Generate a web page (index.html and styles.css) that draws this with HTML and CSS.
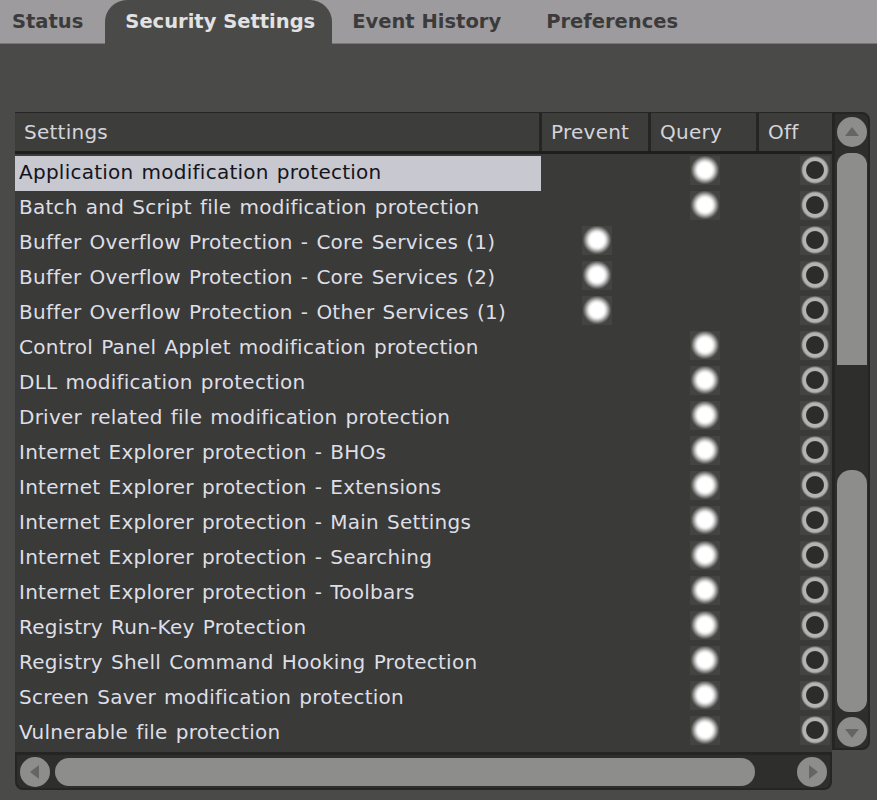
FILE: index.html
```html
<!DOCTYPE html>
<html lang="en">
<head>
    <meta charset="UTF-8">
    <title>Security Settings</title>
    <link rel="stylesheet" href="styles.css">
</head>
<body>
    <div class="tabs">
        <div class="tab first">Status</div>
        <div class="tab active">Security Settings</div>
        <div class="tab">Event History</div>
        <div class="tab">Preferences</div>
    </div>

    <div class="frame">
        <div class="list">
            <div class="row head">
                <div class="cell">Settings</div>
                <div class="cell">Prevent</div>
                <div class="cell">Query</div>
                <div class="cell">Off</div>
            </div>

            <div class="row selected">
                <div class="cell name">Application modification protection</div>
                <div class="cell"></div>
                <div class="cell"><span class="dot"></span></div>
                <div class="cell off"><span class="ring"></span></div>
            </div>
            <div class="row">
                <div class="cell name">Batch and Script file modification protection</div>
                <div class="cell"></div>
                <div class="cell"><span class="dot"></span></div>
                <div class="cell off"><span class="ring"></span></div>
            </div>
            <div class="row">
                <div class="cell name">Buffer Overflow Protection - Core Services (1)</div>
                <div class="cell"><span class="dot"></span></div>
                <div class="cell"></div>
                <div class="cell off"><span class="ring"></span></div>
            </div>
            <div class="row">
                <div class="cell name">Buffer Overflow Protection - Core Services (2)</div>
                <div class="cell"><span class="dot"></span></div>
                <div class="cell"></div>
                <div class="cell off"><span class="ring"></span></div>
            </div>
            <div class="row">
                <div class="cell name">Buffer Overflow Protection - Other Services (1)</div>
                <div class="cell"><span class="dot"></span></div>
                <div class="cell"></div>
                <div class="cell off"><span class="ring"></span></div>
            </div>
            <div class="row">
                <div class="cell name">Control Panel Applet modification protection</div>
                <div class="cell"></div>
                <div class="cell"><span class="dot"></span></div>
                <div class="cell off"><span class="ring"></span></div>
            </div>
            <div class="row">
                <div class="cell name">DLL modification protection</div>
                <div class="cell"></div>
                <div class="cell"><span class="dot"></span></div>
                <div class="cell off"><span class="ring"></span></div>
            </div>
            <div class="row">
                <div class="cell name">Driver related file modification protection</div>
                <div class="cell"></div>
                <div class="cell"><span class="dot"></span></div>
                <div class="cell off"><span class="ring"></span></div>
            </div>
            <div class="row">
                <div class="cell name">Internet Explorer protection - BHOs</div>
                <div class="cell"></div>
                <div class="cell"><span class="dot"></span></div>
                <div class="cell off"><span class="ring"></span></div>
            </div>
            <div class="row">
                <div class="cell name">Internet Explorer protection - Extensions</div>
                <div class="cell"></div>
                <div class="cell"><span class="dot"></span></div>
                <div class="cell off"><span class="ring"></span></div>
            </div>
            <div class="row">
                <div class="cell name">Internet Explorer protection - Main Settings</div>
                <div class="cell"></div>
                <div class="cell"><span class="dot"></span></div>
                <div class="cell off"><span class="ring"></span></div>
            </div>
            <div class="row">
                <div class="cell name">Internet Explorer protection - Searching</div>
                <div class="cell"></div>
                <div class="cell"><span class="dot"></span></div>
                <div class="cell off"><span class="ring"></span></div>
            </div>
            <div class="row">
                <div class="cell name">Internet Explorer protection - Toolbars</div>
                <div class="cell"></div>
                <div class="cell"><span class="dot"></span></div>
                <div class="cell off"><span class="ring"></span></div>
            </div>
            <div class="row">
                <div class="cell name">Registry Run-Key Protection</div>
                <div class="cell"></div>
                <div class="cell"><span class="dot"></span></div>
                <div class="cell off"><span class="ring"></span></div>
            </div>
            <div class="row">
                <div class="cell name">Registry Shell Command Hooking Protection</div>
                <div class="cell"></div>
                <div class="cell"><span class="dot"></span></div>
                <div class="cell off"><span class="ring"></span></div>
            </div>
            <div class="row">
                <div class="cell name">Screen Saver modification protection</div>
                <div class="cell"></div>
                <div class="cell"><span class="dot"></span></div>
                <div class="cell off"><span class="ring"></span></div>
            </div>
            <div class="row">
                <div class="cell name">Vulnerable file protection</div>
                <div class="cell"></div>
                <div class="cell"><span class="dot"></span></div>
                <div class="cell off"><span class="ring"></span></div>
            </div>
        </div>

        <!-- vertical scrollbar -->
        <div class="vscroll">
            <div class="btn"><span class="arrow up"></span></div>
            <div class="thumb top"></div>
            <div class="gap"></div>
            <div class="thumb bottom"></div>
            <div class="btn"><span class="arrow down"></span></div>
        </div>

        <!-- horizontal scrollbar -->
        <div class="hscroll">
            <div class="btn"><span class="arrow left"></span></div>
            <div class="hthumb"></div>
            <div class="btn"><span class="arrow right"></span></div>
        </div>
    </div>
</body>
</html>
```

FILE: styles.css
```css
body {
    margin: 0;
    width: 877px;
    height: 800px;
    overflow: hidden;
    background: #4a4b48;
    font-family: 'DejaVu Sans', Tahoma, sans-serif;
}

/* Tab strip */
.tabs {
    display: flex;
    height: 43px;
    background: #9d9b9d;
    border-bottom: 1px solid #777875;
}

.tab {
    font-size: 19.5px;
    font-weight: bold;
    color: #3b3b3b;
    line-height: 44px;
    padding: 0 25px 0 20px;
}

.tab.first {
    padding: 0 10px 0 12px;
}

.tab.active {
    margin-left: 12px;
    padding: 0 17px 0 20px;
    background: #4a4b48;
    color: #e2e2e2;
    border-radius: 22px 22px 0 0;
    margin-bottom: -1px;
}

/* List frame */
.frame {
    display: grid;
    grid-template-columns: 817px 38px;
    grid-template-rows: 640px 38px;
    margin: 68px 0 0 15px;
}

.list {
    background: #3a3b38;
    overflow: hidden;
    border-top: 1px solid #262725;
}

.row {
    display: grid;
    grid-template-columns: 527px 109px 108px 73px;
    height: 35px;
}

.cell {
    display: flex;
    align-items: center;
    justify-content: center;
    font-size: 20px;
    letter-spacing: 0.25px;
    word-spacing: 1.5px;
    color: #dedee6;
    white-space: nowrap;
    overflow: hidden;
}

.cell.name {
    justify-content: flex-start;
    padding-left: 4px;
    padding-bottom: 4px;
}

.cell.off {
    justify-content: flex-end;
    padding-right: 2px;
}

.row.head {
    height: 38px;
    margin-bottom: 2px;
    border-bottom: 3px solid #1e1f1d;
}

.head .cell {
    justify-content: flex-start;
    padding-left: 9px;
    background: #3d3e3b;
    border-right: 3px solid #252624;
    color: #d4d4da;
    word-spacing: 0;
}

.head .cell:last-child {
    border-right: none;
}

.selected .name {
    background: #c8c8d0;
    color: #141420;
    margin-right: 1px;
}

/* radio marks */
.dot, .ring {
    display: block;
    width: 30px;
    height: 30px;
    margin-bottom: 8px;
}

.dot {
    background: radial-gradient(circle closest-side, #ffffff 0%, #ffffff 45%, #ececec 56%, #b4b4b4 70%, #7c7d7a 82%, #444542 96%), #444542;
}

.ring {
    background: radial-gradient(circle closest-side, #2c2d2b 0%, #2c2d2b 56%, #b4b4b2 63%, #b4b4b2 80%, #8a8b88 86%, #444542 94%), #444542;
}

/* vertical scrollbar */
.vscroll {
    display: flex;
    flex-direction: column;
    align-items: center;
    align-self: start;
    background: #2e2f2d;
    border: 2px solid #252624;
    border-left-width: 3px;
    border-radius: 0 8px 8px 0;
    height: 638px;
    box-sizing: border-box;
    padding: 3px 0 1px;
}

.btn {
    width: 30px;
    height: 30px;
    border-radius: 50%;
    background: #8d8e8b;
    display: flex;
    align-items: center;
    justify-content: center;
    flex: none;
}

.thumb {
    width: 30px;
    background: #8d8e8b;
    flex: none;
}

.thumb.top {
    height: 212px;
    margin-top: 6px;
    border-radius: 12px 12px 0 0;
}

.gap {
    height: 105px;
    flex: none;
}

.thumb.bottom {
    height: 242px;
    border-radius: 14px 14px 12px 12px;
    margin-bottom: 5px;
}

.arrow {
    width: 0;
    height: 0;
    border: 7px solid transparent;
}

.arrow.up {
    border-bottom: 9px solid #656663;
    border-top: none;
    margin-bottom: 2px;
}

.arrow.down {
    border-top: 9px solid #656663;
    border-bottom: none;
    margin-top: 2px;
}

.arrow.left {
    border-right: 9px solid #656663;
    border-left: none;
    margin-right: 2px;
}

.arrow.right {
    border-left: 9px solid #656663;
    border-right: none;
    margin-left: 2px;
}

/* horizontal scrollbar */
.hscroll {
    display: flex;
    align-items: center;
    background: #2e2f2d;
    border: 2px solid #252624;
    border-top-width: 3px;
    border-radius: 0 0 8px 8px;
    height: 38px;
    box-sizing: border-box;
    padding: 0 3px;
}

.hthumb {
    width: 700px;
    height: 28px;
    margin-left: 5px;
    background: #8d8e8b;
    border-radius: 14px;
    margin-right: auto;
}
```
